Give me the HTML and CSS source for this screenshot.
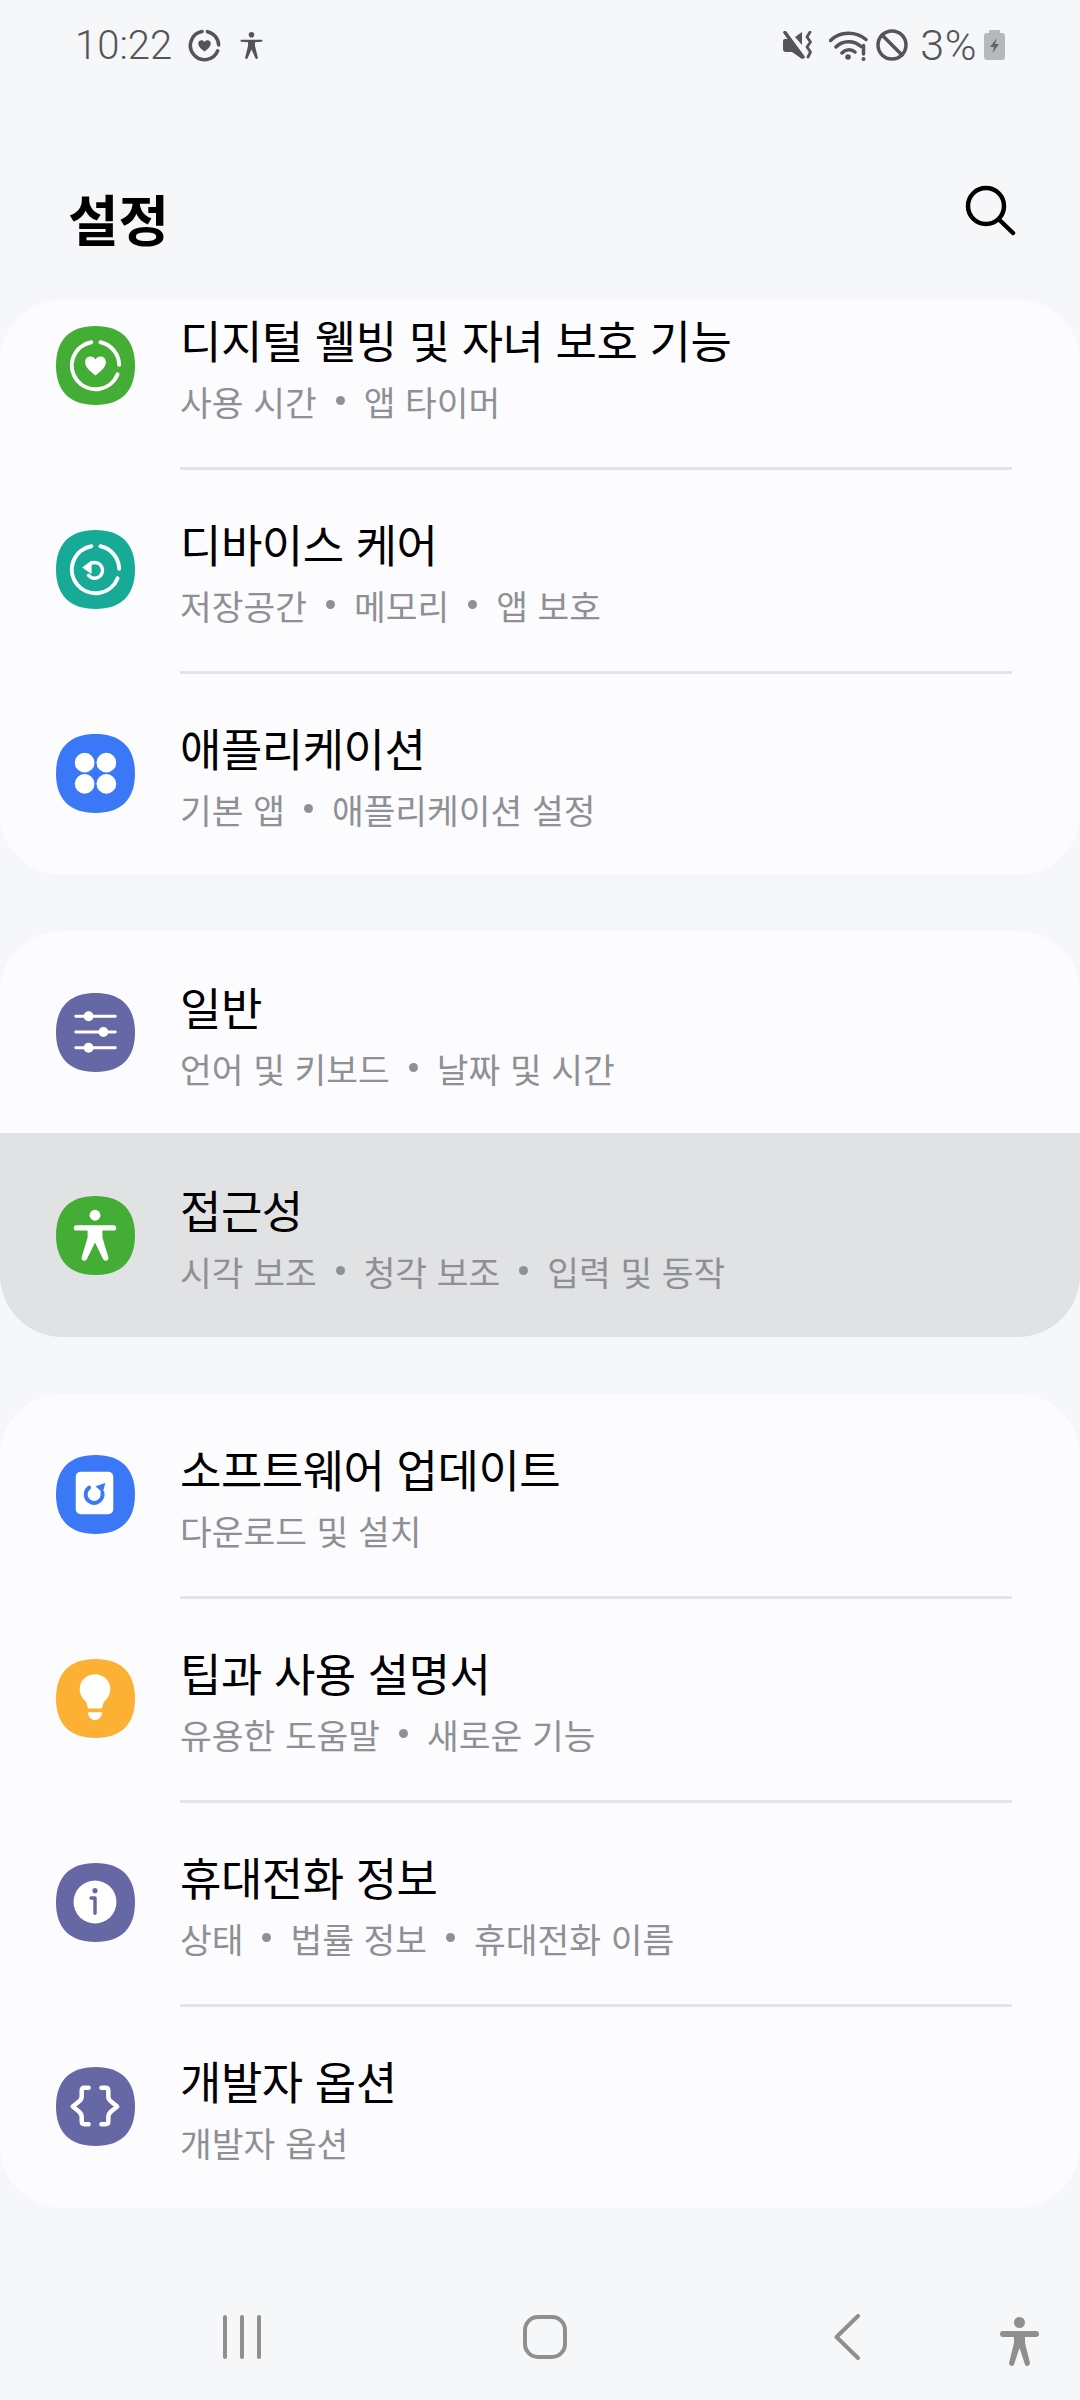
FILE: index.html
```html
<!DOCTYPE html>
<html lang="ko">
<head>
<meta charset="utf-8">
<title>설정</title>
<link rel="stylesheet" href="styles.css">
</head>
<body>
<div class="page">
  <header class="status">
    <div class="status-left">
      <span class="time">10:22</span>
      <svg class="st-ring" viewBox="12 12 56 56"><path class="ring-dark" d="M45 16.5A24 24 0 0 1 64 39.2M62.3 49A24 24 0 1 1 35.8 16.4"/><path class="fill-dark" d="M40 50C36 47 29.5 42.5 29.5 36.5C29.5 33 32 31 35 31C37 31 39 32 40 34C41 32 43 31 45 31C48 31 50.5 33 50.5 36.5C50.5 42.5 44 47 40 50Z"/></svg>
      <svg class="st-person" viewBox="0 0 23 27"><circle class="fill-dark" cx="11.500" cy="2.800" r="2.800"/><path class="fill-dark" d="M1 7.800H22Q23 8.300 22 9.800L15 10.300V14L18 26Q17 27.500 15.500 26.500L11.500 17.500L7.500 26.500Q6 27.500 5 26L8 14V10.300L1 9.800Q0 8.300 1 7.800Z"/></svg>
    </div>
    <div class="status-right">
      <svg class="st-mute" viewBox="0 0 30 28"><path class="fill-dark" d="M0 10Q0 8 2 8H5L19 22V28L9 21H3Q0 21 0 18Z"/><path class="fill-dark" d="M12 6L19 1V14Z"/><path class="line-dark" d="M2 1.500L20 26"/><path class="line-thin" d="M27 1L24 6L27.500 11L24 16L27.500 21L25 26"/></svg>
      <svg class="st-wifi" viewBox="0 0 39 31"><path class="line-dark" d="M1.500 10.500C11 1 27 1 37 9.500M7 17C13.500 10 25 10 32 16.500M13 23C16.500 19 22.500 19 26 22"/><circle class="fill-dark" cx="19" cy="27" r="2.800"/><path class="line-dark" d="M34.500 15.500V24"/><circle class="fill-dark" cx="34.500" cy="29" r="2"/></svg>
      <svg class="st-dnd" viewBox="0 0 32 32"><circle class="line-dark" cx="16" cy="16" r="14"/><path class="line-dark" d="M6 6L26 26"/></svg>
      <span class="pct">3%</span>
      <svg class="st-batt" viewBox="0 0 21 30"><path class="batt-body" d="M6 0H15Q16 0 16 1V3H18Q21 3 21 6V27Q21 30 18 30H3Q0 30 0 27V6Q0 3 3 3H5V1Q5 0 6 0Z"/><path class="batt-bolt" d="M13 8L6 17H10L8.500 23L15 14H11Z"/></svg>
    </div>
  </header>

  <div class="titlebar">
    <h1 class="title">설정</h1>
    <svg class="search" viewBox="0 0 52 52"><circle cx="22" cy="22" r="18"/><path d="M35.500 36L49 49"/></svg>
  </div>

  <section class="card card-scrolled">
    <div class="row">
      <svg class="icon green" viewBox="0 0 80 80"><path class="sq" d="M40 0C66 0 80 14 80 40S66 80 40 80 0 66 0 40 14 0 40 0Z"/><path class="w-line" d="M45 16.500A24 24 0 0 1 64 39.200M62.300 49A24 24 0 1 1 35.800 16.400"/><path class="w-fill" d="M40 50C36 47 29.500 42.500 29.500 36.500C29.500 33 32 31 35 31C37 31 39 32 40 34C41 32 43 31 45 31C48 31 50.500 33 50.500 36.500C50.500 42.500 44 47 40 50Z"/></svg>
      <div class="texts"><div class="name">디지털 웰빙 및 자녀 보호 기능</div><div class="sub">사용 시간<i class="dot"></i>앱 타이머</div></div>
    </div>
    <div class="row">
      <svg class="icon teal" viewBox="0 0 80 80"><path class="sq" d="M40 0C66 0 80 14 80 40S66 80 40 80 0 66 0 40 14 0 40 0Z"/><path class="w-line" d="M45 16.500A24 24 0 0 1 64 39.200M62.300 49A24 24 0 1 1 35.800 16.400"/><path class="w-line-sm" d="M36 33.500A8 8 0 1 1 33 46"/><path class="w-fill" d="M36 31V44.500L26.500 38Z"/></svg>
      <div class="texts"><div class="name">디바이스 케어</div><div class="sub">저장공간<i class="dot"></i>메모리<i class="dot"></i>앱 보호</div></div>
    </div>
    <div class="row">
      <svg class="icon blue" viewBox="0 0 80 80"><path class="sq" d="M40 0C66 0 80 14 80 40S66 80 40 80 0 66 0 40 14 0 40 0Z"/><circle class="w-fill" cx="29" cy="29" r="10"/><circle class="w-fill" cx="51" cy="29" r="10"/><circle class="w-fill" cx="29" cy="50.500" r="10"/><circle class="w-fill" cx="51" cy="50.500" r="10"/></svg>
      <div class="texts"><div class="name">애플리케이션</div><div class="sub">기본 앱<i class="dot"></i>애플리케이션 설정</div></div>
    </div>
  </section>

  <section class="card card-general">
    <div class="row">
      <svg class="icon purple" viewBox="0 0 80 80"><path class="sq" d="M40 0C66 0 80 14 80 40S66 80 40 80 0 66 0 40 14 0 40 0Z"/><path class="w-thin" d="M20 23.500H60M20 39.500H60M20 55.500H60"/><circle class="w-fill" cx="33" cy="23.500" r="5"/><circle class="w-fill" cx="48" cy="39.500" r="5"/><circle class="w-fill" cx="33" cy="55.500" r="5"/></svg>
      <div class="texts"><div class="name">일반</div><div class="sub">언어 및 키보드<i class="dot"></i>날짜 및 시간</div></div>
    </div>
    <div class="row row-active">
      <svg class="icon green" viewBox="0 0 80 80"><path class="sq" d="M40 0C66 0 80 14 80 40S66 80 40 80 0 66 0 40 14 0 40 0Z"/><circle class="w-fill" cx="39.500" cy="19.500" r="5.500"/><rect class="w-fill" x="18" y="29.500" width="43" height="5.500" rx="2.700"/><path class="w-fill" d="M32 32H47L47 42L53 62Q53.500 65 51 65.500Q48.500 66 47.500 63.500L39.500 47L31.500 63.500Q30.500 66 28 65.500Q25.500 65 26 62L32 42Z"/></svg>
      <div class="texts"><div class="name">접근성</div><div class="sub">시각 보조<i class="dot"></i>청각 보조<i class="dot"></i>입력 및 동작</div></div>
    </div>
  </section>

  <section class="card">
    <div class="row">
      <svg class="icon blue" viewBox="0 0 80 80"><path class="sq" d="M40 0C66 0 80 14 80 40S66 80 40 80 0 66 0 40 14 0 40 0Z"/><rect class="w-fill" x="20" y="17" width="38" height="43" rx="5"/><path class="b-line" d="M33.500 33A8.600 8.600 0 1 0 47 38"/><path class="b-fill" d="M50 28.300L40 31.700L47.300 38.300Z"/></svg>
      <div class="texts"><div class="name">소프트웨어 업데이트</div><div class="sub">다운로드 및 설치</div></div>
    </div>
    <div class="row">
      <svg class="icon amber" viewBox="0 0 80 80"><path class="sq" d="M40 0C66 0 80 14 80 40S66 80 40 80 0 66 0 40 14 0 40 0Z"/><path class="w-fill" d="M39.500 15.500C31 15.500 24 22 24 30.500C24 36 27 40.500 30 43C32 45 31.500 50 33 50H46C47.500 50 47 45 49 43C52 40.500 55 36 55 30.500C55 22 48 15.500 39.500 15.500Z"/><path class="w-fill" d="M32 54H47C46 59 43 62 39.500 62C36 62 33 59 32 54Z"/></svg>
      <div class="texts"><div class="name">팁과 사용 설명서</div><div class="sub">유용한 도움말<i class="dot"></i>새로운 기능</div></div>
    </div>
    <div class="row">
      <svg class="icon purple" viewBox="0 0 80 80"><path class="sq" d="M40 0C66 0 80 14 80 40S66 80 40 80 0 66 0 40 14 0 40 0Z"/><circle class="w-fill" cx="39.500" cy="39.500" r="21.700"/><circle class="p-fill" cx="39.500" cy="28" r="2.600"/><path class="p-line" d="M35.500 35.500H39.500V51"/></svg>
      <div class="texts"><div class="name">휴대전화 정보</div><div class="sub">상태<i class="dot"></i>법률 정보<i class="dot"></i>휴대전화 이름</div></div>
    </div>
    <div class="row">
      <svg class="icon purple" viewBox="0 0 80 80"><path class="sq" d="M40 0C66 0 80 14 80 40S66 80 40 80 0 66 0 40 14 0 40 0Z"/><path class="w-brace" d="M33 21H29Q26 21 26 24V30Q26 33 22 36L17 40L22 44Q26 47 26 50V55Q26 58 29 58H33M46 21H50Q53 21 53 24V30Q53 33 57 36L62 40L57 44Q53 47 53 50V55Q53 58 50 58H46"/></svg>
      <div class="texts"><div class="name">개발자 옵션</div><div class="sub">개발자 옵션</div></div>
    </div>
  </section>

  <nav class="navbar">
    <svg class="nav-recents" viewBox="0 0 38 44"><path d="M2 2V42M19 2V42M36 2V42"/></svg>
    <svg class="nav-home" viewBox="0 0 44 44"><rect x="2" y="2" width="40" height="40" rx="13"/></svg>
    <svg class="nav-back" viewBox="0 0 26 46"><path d="M24 2L2.500 23L24 44"/></svg>
    <svg class="nav-person" viewBox="0 0 39 49"><ellipse class="nav-solid" cx="19.500" cy="5.500" rx="5.500" ry="5.500"/><path class="nav-solid" d="M3 14H36Q39 14 39 17Q39 20 36 20H25L25 26L30 46Q29.500 49 27 49Q25 49 24.500 46L19.500 31L14.500 46Q14 49 12 49Q9.500 49 9 46L14 26L14 20H3Q0 20 0 17Q0 14 3 14Z"/></svg>
  </nav>
</div>
</body>
</html>
```
FILE: styles.css
```css
* { box-sizing: border-box; }
html, body { margin: 0; padding: 0; }
body {
  width: 1080px;
  height: 2400px;
  overflow: hidden;
  background: #f6f7f9;
  font-family: "Noto Sans CJK KR", "Noto Sans", sans-serif;
}
.page { display: flex; flex-direction: column; height: 2400px; }

.status {
  flex: none;
  height: 90px;
  display: flex;
  align-items: center;
  justify-content: space-between;
  padding: 0 75px 0 75px;
  color: #555557;
  font-family: Roboto, "Liberation Sans", sans-serif;
  font-size: 40px;
  font-weight: 300;
}
.status-left, .status-right { display: flex; align-items: center; }
.status-left { gap: 16px; }
.st-ring { width: 33px; height: 33px; }
.st-person { width: 23px; height: 27px; margin-left: 3px; }
.st-mute { width: 30px; height: 28px; margin-right: 16px; }
.st-wifi { width: 39px; height: 31px; margin-right: 8px; }
.st-dnd { width: 32px; height: 32px; margin-right: 12px; }
.pct { margin-right: 7px; font-size: 43px; letter-spacing: 0.5px; }
.st-batt { width: 21px; height: 30px; }
.fill-dark { fill: #555557; }
.ring-dark { fill: none; stroke: #555557; stroke-width: 6; stroke-linecap: round; }
.line-dark { fill: none; stroke: #555557; stroke-width: 3.500; stroke-linecap: round; }
.line-thin { fill: none; stroke: #555557; stroke-width: 2.800; stroke-linecap: round; stroke-linejoin: round; }
.batt-body { fill: #b7b8ba; }
.batt-bolt { fill: #626365; }

.titlebar {
  flex: none;
  height: 210px;
  padding: 30px 64px 0 68px;
  display: flex;
  align-items: center;
  justify-content: space-between;
}
.title {
  margin: 14px 0 0;
  font-size: 55px;
  font-weight: 700;
  line-height: 70px;
  color: #000;
}
.search { width: 52px; height: 52px; fill: none; stroke: #000; stroke-width: 4.500; stroke-linecap: round; }

.card {
  flex: none;
  background: #fcfcfe;
  border-radius: 62px;
  overflow: hidden;
  margin-bottom: 57px;
}
.card-scrolled { margin-bottom: 56px; }
.card:last-of-type { margin-bottom: 0; }
.row {
  height: 204px;
  display: flex;
  align-items: center;
  padding: 0 0 4px 56px;
  gap: 45px;
  position: relative;
}
.row:last-child { height: 202px; padding-bottom: 2px; }
.row + .row::before {
  content: "";
  position: absolute;
  top: -2px;
  left: 180px;
  right: 68px;
  height: 3px;
  background: #e3e4e6;
}
.card-general .row { height: 202px; padding-bottom: 0; }
.card-general .row-active { height: 204px; background: #e1e2e4; }
.card-general .row-active::before { display: none; }
.card-scrolled .row:first-child { margin-top: -35px; }

.icon { width: 79px; height: 79px; flex: none; }
.green .sq { fill: #43ad36; }
.teal .sq { fill: #17ab97; }
.blue .sq { fill: #3a78f8; }
.purple .sq { fill: #6668a6; }
.amber .sq { fill: #fcb134; }
.w-fill { fill: #fff; }
.w-line { fill: none; stroke: #fff; stroke-width: 4; stroke-linecap: round; }
.w-line-sm { fill: none; stroke: #fff; stroke-width: 3.500; stroke-linecap: round; }
.w-thin { fill: none; stroke: #fff; stroke-width: 3; stroke-linecap: round; }
.w-brace { fill: none; stroke: #fff; stroke-width: 4.500; stroke-linecap: round; stroke-linejoin: round; }
.b-line { fill: none; stroke: #3a78f8; stroke-width: 4; stroke-linecap: round; }
.b-fill { fill: #3a78f8; }
.p-fill { fill: #6668a6; }
.p-line { fill: none; stroke: #6668a6; stroke-width: 3.500; stroke-linecap: round; stroke-linejoin: round; }

.texts { display: flex; flex-direction: column; padding-top: 3px; }
.name {
  font-size: 45px;
  line-height: 58px;
  letter-spacing: -0.5px;
  color: #000;
}
.sub {
  margin-top: 10px;
  font-size: 34.500px;
  line-height: 44px;
  color: #8f9094;
  display: flex;
  align-items: center;
}
.dot {
  width: 9px;
  height: 9px;
  border-radius: 50%;
  background: #8f9094;
  margin: 0 19px;
}

.navbar {
  flex: none;
  display: flex;
  align-items: center;
  height: 192px;
  padding: 66px 0 0 223px;
}
.navbar svg { fill: none; stroke: #8f8f8f; stroke-width: 4; stroke-linecap: round; stroke-linejoin: round; flex: none; }
.nav-recents { width: 38px; height: 44px; margin-right: 262px; }
.nav-home { width: 44px; height: 44px; margin-right: 267px; }
.nav-back { width: 26px; height: 46px; margin-right: 140px; }
.nav-person { width: 39px; height: 49px; margin-top: 8px; }
.navbar .nav-solid { fill: #8f8f8f; stroke: none; }
```
